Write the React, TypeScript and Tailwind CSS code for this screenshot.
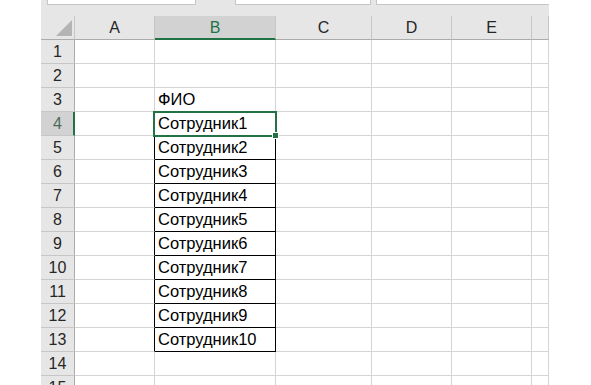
import React from 'react';

const columns = [
  { name: 'A', width: 'w-[80px]' },
  { name: 'B', width: 'w-[121px]' },
  { name: 'C', width: 'w-[96px]' },
  { name: 'D', width: 'w-[80px]' },
  { name: 'E', width: 'w-[80px]' },
  { name: '', width: 'w-[17px]' },
];

const values: Record<number, string> = {
  3: 'ФИО',
  4: 'Сотрудник1',
  5: 'Сотрудник2',
  6: 'Сотрудник3',
  7: 'Сотрудник4',
  8: 'Сотрудник5',
  9: 'Сотрудник6',
  10: 'Сотрудник7',
  11: 'Сотрудник8',
  12: 'Сотрудник9',
  13: 'Сотрудник10',
};

const rows = Array.from({ length: 15 }, (_, i) => i + 1);

const inTable = (row: number) => row >= 4 && row <= 13;

const cellClass = (row: number, col: string) => {
  let right = 'border-r-[#d4d4d4]';
  let bottom = 'border-b-[#d4d4d4]';
  if (col === 'A' && inTable(row)) right = 'border-r-black';
  if (col === 'B' && inTable(row)) {
    right = 'border-r-black';
    bottom = 'border-b-black';
  }
  if (col === 'B' && row === 3) bottom = 'border-b-black';
  return `${right} ${bottom}`;
};

const App: React.FC = () => {
  return (
    <div className="flex h-[385px] w-[591px] overflow-hidden bg-white font-['Liberation_Sans',sans-serif] text-black">
      <div className="w-[41px] shrink-0" />
      <div className="flex w-[508px] shrink-0 flex-col bg-[#e6e6e6]">
        {/* Formula bar remains */}
        <div className="flex h-[16px] shrink-0 items-start">
          <div className="ml-[6px] h-[5px] w-[149px] border-x border-b border-[#c6c6c6] bg-white" />
          <div className="ml-[39px] h-[5px] w-[136px] border-x border-b border-[#c6c6c6] bg-white" />
          <div className="ml-[5px] h-[5px] w-[173px] border-l border-b border-[#c6c6c6] bg-white" />
        </div>

        <div className="relative flex flex-col bg-white">
          {/* Column headers */}
          <div className="flex h-[24px] shrink-0 bg-[#e6e6e6]">
            <div className="relative box-border w-[34px] border-r border-b border-r-[#c6c6c6] border-b-[#ababab]">
              <div className="absolute right-[2px] bottom-[3px] h-0 w-0 border-b-[16px] border-l-[16px] border-b-[#b4b4b4] border-l-transparent" />
            </div>
            {columns.map((c) =>
              c.name === 'B' ? (
                <div
                  key="B"
                  className="box-border flex w-[121px] items-center justify-center border-r border-b-2 border-r-[#c6c6c6] border-b-[#217346] bg-[#d2d2d2] pt-[1px] text-[16px] text-[#217346]"
                >
                  B
                </div>
              ) : (
                <div
                  key={c.name || 'F'}
                  className={`box-border flex ${c.width} items-center justify-center border-r border-b border-r-[#c6c6c6] border-b-[#ababab] pt-[1px] text-[16px] text-[#262626]`}
                >
                  {c.name}
                </div>
              )
            )}
          </div>

          {/* Rows */}
          {rows.map((row) => (
            <div key={row} className="flex h-[24px] shrink-0">
              {row === 4 ? (
                <div className="box-border flex w-[34px] items-center justify-center border-r-2 border-b border-r-[#217346] border-b-[#c6c6c6] bg-[#d2d2d2] pl-[1px] text-[16px] text-[#4b6b59]">
                  {row}
                </div>
              ) : (
                <div className="box-border flex w-[34px] items-center justify-center border-r border-b border-r-[#ababab] border-b-[#c6c6c6] bg-[#e6e6e6] text-[16px] text-[#262626]">
                  {row}
                </div>
              )}
              {columns.map((c) => (
                <div
                  key={c.name || 'F'}
                  className={`box-border flex ${c.width} items-end overflow-hidden whitespace-nowrap border-r border-b pb-[2px] pl-[3px] text-[16.5px] leading-[20px] ${cellClass(row, c.name)}`}
                >
                  {c.name === 'B' ? values[row] ?? '' : ''}
                </div>
              ))}
            </div>
          ))}

          {/* Active cell B4 */}
          <div className="pointer-events-none absolute top-[95px] left-[112px] h-[26px] w-[124px] border-2 border-[#217346]" />
          <div className="pointer-events-none absolute top-[116px] left-[231px] h-[7px] w-[7px] border border-white bg-[#217346]" />
        </div>
      </div>
    </div>
  );
};

export default App;
